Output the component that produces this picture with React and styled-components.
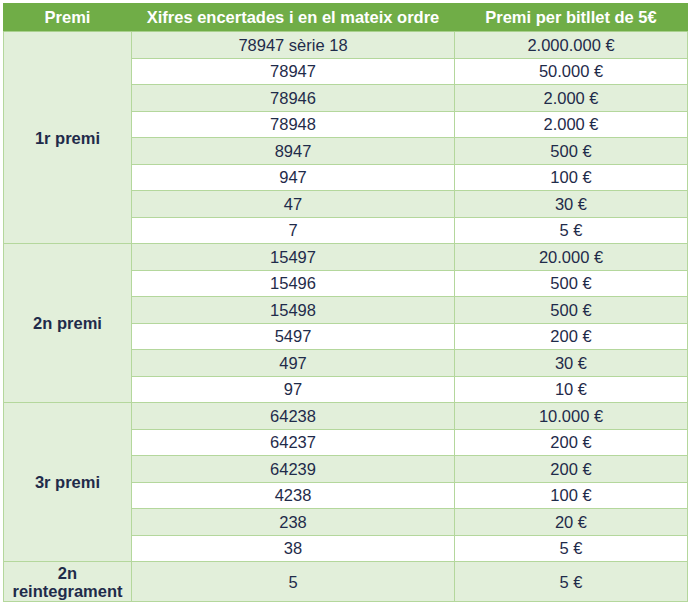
import React from "react";
import styled, { createGlobalStyle } from "styled-components";

const GlobalStyle = createGlobalStyle`
  html, body {
    margin: 0;
    padding: 0;
    background: #ffffff;
  }
  body {
    padding: 3px;
    font-family: "Liberation Sans", Arial, sans-serif;
  }
`;

const Table = styled.table`
  border-collapse: collapse;
  width: 684px;
  table-layout: fixed;
  font-size: 16.5px;
  color: #1f2b4a;
`;

const HeadCell = styled.th`
  background: #70ad47;
  color: #ffffff;
  font-weight: bold;
  height: 27px;
  padding: 0;
  text-align: center;
  border: 1px solid #70ad47;
  border-bottom-color: #a9d08e;
`;

const Cell = styled.td`
  height: ${props => props.tall ? "39px" : "25.5px"};
  padding: 0;
  text-align: center;
  vertical-align: middle;
  line-height: 18px;
  border: 1px solid #b4d79c;
  background: ${props => props.shade ? "#e2efda" : "#ffffff"};
`;

const GroupCell = styled(Cell)`
  background: #e2efda;
  font-weight: bold;
  line-height: 18px;
`;

const groups = [
  {
    name: "1r premi",
    rows: [
      ["78947 sèrie 18", "2.000.000 €"],
      ["78947", "50.000 €"],
      ["78946", "2.000 €"],
      ["78948", "2.000 €"],
      ["8947", "500 €"],
      ["947", "100 €"],
      ["47", "30 €"],
      ["7", "5 €"],
    ],
  },
  {
    name: "2n premi",
    rows: [
      ["15497", "20.000 €"],
      ["15496", "500 €"],
      ["15498", "500 €"],
      ["5497", "200 €"],
      ["497", "30 €"],
      ["97", "10 €"],
    ],
  },
  {
    name: "3r premi",
    rows: [
      ["64238", "10.000 €"],
      ["64237", "200 €"],
      ["64239", "200 €"],
      ["4238", "100 €"],
      ["238", "20 €"],
      ["38", "5 €"],
    ],
  },
];

export default function App() {
  return (
    <>
      <GlobalStyle />
      <Table>
        <colgroup>
          <col style={{ width: "128px" }} />
          <col style={{ width: "323px" }} />
          <col style={{ width: "233px" }} />
        </colgroup>
        <thead>
          <tr>
            <HeadCell>Premi</HeadCell>
            <HeadCell>Xifres encertades i en el mateix ordre</HeadCell>
            <HeadCell>Premi per bitllet de 5€</HeadCell>
          </tr>
        </thead>
        <tbody>
          {groups.map(group =>
            group.rows.map((row, i) => (
              <tr key={group.name + i}>
                {i === 0 && (
                  <GroupCell rowSpan={group.rows.length}>{group.name}</GroupCell>
                )}
                <Cell shade={i % 2 === 0}>{row[0]}</Cell>
                <Cell shade={i % 2 === 0}>{row[1]}</Cell>
              </tr>
            ))
          )}
          <tr>
            <GroupCell tall>2n<br />reintegrament</GroupCell>
            <Cell tall shade>5</Cell>
            <Cell tall shade>5 €</Cell>
          </tr>
        </tbody>
      </Table>
    </>
  );
}
